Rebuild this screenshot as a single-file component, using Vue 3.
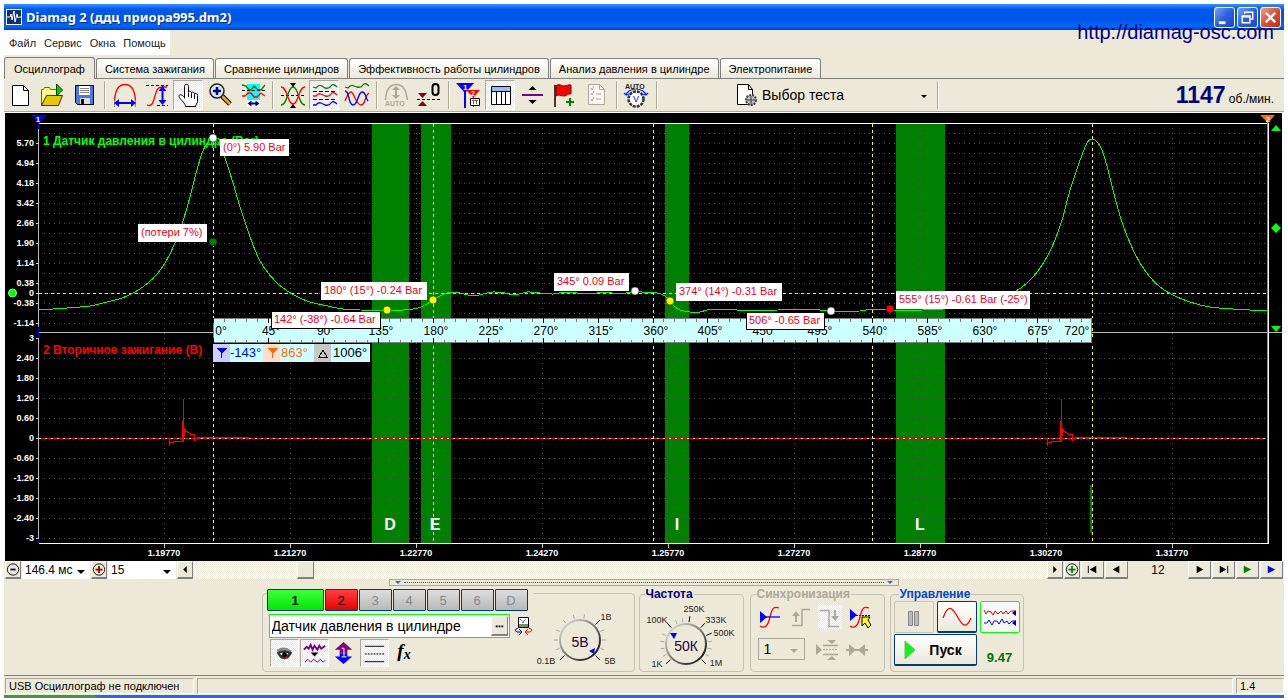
<script setup>
import { ref } from 'vue'

const tabs = [
  'Осциллограф',
  'Система зажигания',
  'Сравнение цилиндров',
  'Эффективность работы цилиндров',
  'Анализ давления в цилиндре',
  'Электропитание',
]
const menu = ['Файл', 'Сервис', 'Окна', 'Помощь']
const channelName = ref('Датчик давления в цилиндре')

const tools = [
  { t: 'Новый', i: '<path d="M7.5 4.5h11l5 5v15h-16z" fill="#fff" stroke="#000"/><path d="M18.5 4.5v5h5" fill="none" stroke="#000"/>' },
  { t: 'Открыть', i: '<path d="M4.5 24.5v-16h2l1-2h5l1 2h7v5" fill="#ffff80" stroke="#806000"/><path d="M4.5 24.5l5-10h16l-4 10z" fill="#e8c800" stroke="#403000"/><path d="M19.5 3v12l6-6z" fill="#0c0" stroke="#004000"/>' },
  { t: 'Сохранить', i: '<path d="M6.5 4.5h18v19h-16l-2-2z" fill="#4878e0" stroke="#000"/><path d="M10 5h11v9h-11z" fill="#fff"/><path d="M11 7.5h9M11 9.5h9M11 11.5h9" stroke="#888"/><path d="M11 17h10v6h-10z" fill="#ddd"/><path d="M12 18h3v5h-3z" fill="#111"/>' },
  'sep',
  { t: 'Период', i: '<path d="M5.5 20C6 10 9 3.5 16 3.5S26 10 26.5 20" fill="none" stroke="red" stroke-width="1.3"/><path d="M5.5 19v7M26.5 19v7" stroke="#888"/><path d="M5 22l5-4v3h12v-3l5 4-5 4v-3h-12v3z" fill="#00f"/>' },
  { t: 'Амплитуда', i: '<path d="M5 4.5h22M16 24.5h11" stroke="#000" stroke-dasharray="3 2"/><path d="M6 24c5 2 6-2 8-9s3-9 7-9h5" fill="none" stroke="red" stroke-width="1.3"/><path d="M21.5 5l4 5h-3v9h3l-4 5-4-5h3v-9h-3z" fill="#00f"/>' },
  { t: 'Рука', on: 1, i: '<path d="M11.5 17.5V5.5c0-3 4-3 4 0v6c0-2 3-2 3 1 0-2 3-2 3 1 0-2 3-1 3 1v6c0 2-2 3-2 5h-10c0-3-4-6-6-9-2-3 2-4 5 0" fill="#fff" stroke="#000"/><path d="M15.5 12v4M18.5 13v4M21.5 14v4" stroke="#000"/>' },
  { t: 'Лупа', i: '<path d="M17 15l8 8" stroke="#000" stroke-width="5"/><path d="M17 15l8 8" stroke="#e8a020" stroke-width="3"/><circle cx="12" cy="10" r="7" fill="#d8ecff" stroke="#222" stroke-width="1.5"/><path d="M8 10h8M12 6v8" stroke="#000090" stroke-width="2.5"/>' },
  { t: 'Участок', i: '<path d="M10 3h13v23h-13z" fill="#0ff"/><path d="M5 4l4 1 3 4h2l3-4 4 4h3l4-5" fill="none" stroke="green" stroke-width="1.3"/><path d="M5 9.5h23" stroke="#000" stroke-dasharray="3 2"/><path d="M5 15h3l3-3h3l3 4h3l4-4 4 3" fill="none" stroke="red" stroke-width="1.3"/><path d="M10 19h13v7h-13z" fill="#fff"/><path d="M10.5 22.5l4-3v2h4v-2l4 3-4 3v-2h-4v2z" fill="#0000a0"/>' },
  'sep',
  { t: 'Выравнивание', i: '<path d="M4 14.5h24" stroke="#000" stroke-dasharray="3 2"/><path d="M4 24c7 0 6-18 12-18s5 18 12 18" fill="none" stroke="green" stroke-width="1.3"/><path d="M4 6c7 0 6 17 12 17s5-17 12-17" fill="none" stroke="red" stroke-width="1.3"/><path d="M13 2h6l-3 4zM13 27h6l-3-4z" fill="#000"/>' },
  { t: 'Раздельно', on: 1, i: '<path d="M4 10.5h24M4 18.5h24" stroke="#000" stroke-dasharray="4 2"/><path d="M4 6l3 1q3-4 6-2l3 2q4 1 6-2t6 1" fill="none" stroke="green" stroke-width="1.3"/><path d="M4 15h3q2-3 5-2l4 2q4 1 6-2t6 1" fill="none" stroke="red" stroke-width="1.3"/><path d="M4 24h3q2-3 5-2l4 2q4 1 6-2t6 1" fill="none" stroke="#00f" stroke-width="1.3"/>' },
  { t: 'Совместно', i: '<path d="M4 6l3 1q3-4 6-2l3 1q4 1 6-2t6 1" fill="none" stroke="green" stroke-width="1.3"/><path d="M4 20c2-4 3-9 6-9s5 13 10 13 3-9 8-12" fill="none" stroke="red" stroke-width="1.3"/><path d="M4 10c5 0 3 14 8 14s5-13 9-13 3 5 6 9" fill="none" stroke="#00f" stroke-width="1.3"/>' },
  'sep',
  { t: 'Авто', i: '<path d="M4.5 19C5 10 8 3.5 15.5 3.5S25 10 26.5 19" fill="none" stroke="#aca899" stroke-width="1.5"/><path d="M15 5l4 4h-3v5h3l-4 4-4-4h3v-5h-3z" fill="#aca899"/><text x="4" y="25" font-size="7" font-weight="bold" fill="#aca899">AUTO</text>' },
  { t: 'Ноль', i: '<path d="M4 18.5h23" stroke="#000" stroke-dasharray="3 2"/><path d="M5 12h9l-4.5 5zM5 25h9l-4.5-5z" fill="#900000"/><rect x="19.5" y="3" width="6" height="11" rx="3" fill="none" stroke="#000" stroke-width="2"/>' },
  'sep',
  { t: 'Маркеры', i: '<path d="M3 2h18l-8 9v16h-2v-16z" fill="#00f"/><path d="M13 9h14l-6 7v10h-1v-10z" fill="red"/><text x="10" y="9" font-size="8" fill="#fff" font-weight="bold">1</text><text x="18" y="15" font-size="7" fill="#fff" font-weight="bold">2</text><path d="M17.5 17.5h9v7h-9z" fill="#fff" stroke="#000"/><path d="M19 19.5h6M20.5 19v4M23.5 19v4" stroke="#666"/>' },
  { t: 'Таблица', on: 1, i: '<path d="M6.5 5.5h19v18h-19z" fill="#fff" stroke="#000"/><path d="M7 6h18v4h-18z" fill="#90c0f8"/><path d="M6.5 10.5h19M11.5 10v14M16.5 10v14M20.5 10v14" stroke="#000"/>' },
  { t: 'Разделить', i: '<path d="M5 14h21" stroke="purple" stroke-width="2"/><path d="M11.5 9h8l-4-4zM11.5 19h8l-4 4z" fill="#000"/>' },
  { t: 'Флаг', i: '<path d="M6 4v22" stroke="#000" stroke-width="1.5"/><path d="M7 5c3-3 5 0 8 0s5-2 7-1v9c-3-1-4 2-7 2s-5-2-8 0z" fill="red" stroke="#800000"/><path d="M17 21h8M21 17v8" stroke="green" stroke-width="2"/>' },
  { t: 'Отчёт', i: '<path d="M7.5 3.5h11l5 5v15h-16z" fill="#f8f7f2" stroke="#aca899"/><path d="M18.5 3.5v5h5M10 7l1 2 2-4M10 12l1 2 2-4M10 18l1 2 2-4M15 13h5M15 18h5" fill="none" stroke="#aca899"/>' },
  'sep',
  { t: 'Автонастройка', i: '<text x="4" y="8" font-size="7" font-weight="bold" fill="#222">AUTO</text><circle cx="15" cy="18" r="7.5" fill="#fff" stroke="#333" stroke-width="2.5" stroke-dasharray="3 1"/><text x="12" y="21" font-size="9" fill="#00f">V</text><path d="M5 13l3-3q7-4 14 0l3 3M3 12l2 2 3-1M27 12l-2 2-3-1" fill="none" stroke="#0030ff" stroke-width="1.2"/>' },
  'sep',
]

const smooth = (pts) => {
  let d = `M${pts[0][0]} ${pts[0][1]}`
  for (let i = 0; i < pts.length - 1; i++) {
    const p0 = pts[Math.max(i - 1, 0)]
    const p1 = pts[i]
    const p2 = pts[i + 1]
    const p3 = pts[Math.min(i + 2, pts.length - 1)]
    d += `C${p1[0] + (p2[0] - p0[0]) / 6} ${p1[1] + (p2[1] - p0[1]) / 6} ${p2[0] - (p3[0] - p1[0]) / 6} ${p2[1] - (p3[1] - p1[1]) / 6} ${p2[0]} ${p2[1]}`
  }
  return d
}
const pressure = smooth([
  [39, 310], [67, 308], [90, 306], [107, 302], [122, 298], [135, 292], [148, 283], [157, 274], [165, 263], [175, 243],
  [183, 221], [190, 197], [195, 177], [202, 153], [208, 142], [213, 139], [218, 142], [225, 158], [233, 183], [240, 207],
  [247, 228], [255, 250], [263, 266], [277, 283], [292, 294], [307, 301], [323, 305], [343, 309], [360, 310], [387, 310],
  [403, 310], [418, 308], [427, 304], [433, 300], [440, 296], [447, 293], [453, 292], [460, 293], [473, 296], [483, 294],
  [493, 292], [505, 293], [515, 295], [527, 292], [540, 293], [553, 294], [567, 292], [587, 294], [607, 292], [617, 294],
  [635, 292], [657, 293], [665, 296], [670, 301], [675, 307], [680, 310], [690, 312], [700, 312], [707, 310], [720, 309],
  [737, 310], [747, 311], [778, 310], [820, 310], [832, 311], [860, 311], [866, 310], [890, 310], [923, 310], [943, 309],
  [973, 305], [1000, 298], [1016, 291], [1027, 283], [1038, 271], [1048, 255], [1055, 240], [1063, 217], [1068, 197],
  [1075, 175], [1082, 155], [1087, 143], [1092, 139], [1097, 142], [1102, 150], [1108, 170], [1115, 198], [1122, 222],
  [1130, 243], [1140, 263], [1150, 277], [1160, 287], [1173, 295], [1190, 302], [1210, 307], [1233, 309], [1267, 311],
])
const yTop = [[143, '5.70'], [163, '4.94'], [183, '4.18'], [203, '3.42'], [223, '2.66'], [243, '1.90'], [263, '1.14'], [283, '0.38'], [293, '0'], [303, '-0.38'], [323, '-1.14']]
const yBottom = ['3', '2.40', '1.80', '1.20', '0.60', '0', '-0.60', '-1.20', '-1.80', '-2.40', '-3'].map((v, i) => [338 + i * 20, v])
const yLabels = [...yTop, ...yBottom]
const xLabels = ['1.19770', '1.21270', '1.22770', '1.24270', '1.25770', '1.27270', '1.28770', '1.30270', '1.31770'].map((v, i) => [164 + i * 126, v])
const gridY = [...Array.from({ length: 20 }, (_, i) => 133 + i * 10), ...Array.from({ length: 10 }, (_, i) => 358 + i * 20)]
const bands = [
  { x: 372, w: 37, l: 'D', c: 390 },
  { x: 421, w: 30, l: 'E', c: 435 },
  { x: 665, w: 24, l: 'I', c: 677 },
  { x: 896, w: 49, l: 'L', c: 920 },
]
const strokesX = [213, 433, 653, 872, 1092]
const ruler = Array.from({ length: 81 }, (_, i) => ({ x: Math.round(213 + (i * 879) / 80) + 0.5, major: i % 5 === 0 }))
const degrees = Array.from({ length: 17 }, (_, i) => ({ x: i === 0 ? 221 : i === 16 ? 1077 : Math.round(216 + (i * 879) / 16), v: i * 45 + '°' }))
const callouts = [
  { x: 220, y: 139, w: 69, h: 17, s: '(0°) 5.90 Bar' },
  { x: 138, y: 224, w: 69, h: 18, s: '(потери 7%)' },
  { x: 321, y: 282, w: 106, h: 18, s: '180° (15°) -0.24 Bar' },
  { x: 271, y: 311, w: 109, h: 17, s: '142° (-38°) -0.64 Bar', b: 1 },
  { x: 554, y: 273, w: 75, h: 18, s: '345° 0.09 Bar' },
  { x: 676, y: 283, w: 106, h: 18, s: '374° (14°) -0.31 Bar' },
  { x: 746, y: 312, w: 78, h: 17, s: '506° -0.65 Bar', b: 1 },
  { x: 896, y: 291, w: 134, h: 18, s: '555° (15°) -0.61 Bar (-25°)' },
]
const points = [
  [213, 138, '#fff'], [213, 242, '#008000'], [387, 310, '#ff0'], [433, 300, '#ff0'],
  [635, 291, '#fff'], [670, 301, '#ff0'], [831, 311, '#fff'], [890, 309, '#f00'],
]
const spark = 'M169.5 438v8M170 442.5h3v-1h10v-20M182.5 441V421M183.5 441V399M184.5 436v-8l1 3 2 1 3 2h4v7M195 438h2M197 437.5h52'

const tick = (cx, cy, r1, r2, deg) => {
  const a = (deg * Math.PI) / 180
  return { x1: cx + r1 * Math.sin(a), y1: cy - r1 * Math.cos(a), x2: cx + r2 * Math.sin(a), y2: cy - r2 * Math.cos(a) }
}
const dial = (cx, cy, angles, named) => angles.map((d) => ({ d, main: named.includes(d), ...tick(cx, cy, 22, named.includes(d) ? 28 : 26, d) }))
const voltTicks = dial(50, 53, [-135, -112, -90, -67, -40, -15, 10, 45, 67, 90, 112, 135], [-135, 45, 135])
const freqTicks = dial(46, 49, [-135, -118, -101, -84, -67, -42, -24, -8, 8, 42, 67, 84, 101, 118, 135], [-135, -42, 8, 42, 67, 135])
</script>

<template>
  <div class="window">
    <header class="title">
      <svg class="logo" viewBox="0 0 16 16"><path d="M0 0h16v16H0z" fill="#fff" /><path d="M1 1h14v14H1z" fill="#103070" /><path d="M1 8h3l1-3 1 6 2-9 1 11 2-8 1 4 1-1h2" fill="none" stroke="#fff" /></svg>
      <h1>Diamag 2 (ддц приора995.dm2)</h1>
      <div class="winbtns">
        <button aria-label="Свернуть"><svg viewBox="0 0 20 20"><path d="M4 14h7v3H4z" fill="#fff" /></svg></button>
        <button aria-label="Развернуть"><svg viewBox="0 0 20 20"><path d="M7 6V4.5h8.5v7H13M4.5 8.5h8v7h-8z" fill="none" stroke="#fff" stroke-width="1.5" /><path d="M4 8h9v2H4z" fill="#fff" /></svg></button>
        <button class="close" aria-label="Закрыть"><svg viewBox="0 0 20 20"><path d="M5 5l10 10M15 5L5 15" stroke="#fff" stroke-width="2.5" /></svg></button>
      </div>
      <a class="site" href="#">http://diamag-osc.com</a>
    </header>

    <nav class="menu"><button v-for="m in menu" :key="m">{{ m }}</button></nav>

    <nav class="tabs">
      <button v-for="(t, i) in tabs" :key="t" :class="{ active: i === 0 }">{{ t }}</button>
    </nav>

    <div class="toolbar">
      <template v-for="(b, i) in tools" :key="i">
        <span v-if="b === 'sep'" class="sep"></span>
        <button v-else :class="['tool', { on: b.on }]" :aria-label="b.t"><svg viewBox="0 0 30 28" v-html="b.i"></svg></button>
      </template>
      <div class="test">
        <svg viewBox="0 0 22 24"><path d="M1.5 1.5h11l4 5v15h-15z" fill="#fffff4" stroke="#000" /><path d="M12.5 1.5v5h4" fill="none" stroke="#000" /><circle cx="15" cy="17" r="5" fill="#bbb" stroke="#444" stroke-width="2" stroke-dasharray="2 1" /><path d="M11 17h8M15 13v8" stroke="#444" /></svg>
        <span class="pick"><select aria-label="Выбор теста"><option>Выбор теста</option></select></span>
      </div>
      <span class="sep"></span>
      <p class="rpm"><b>1147</b> об./мин.</p>
    </div>

    <svg class="scope" viewBox="4 112 1280 449" shape-rendering="crispEdges">
      <rect x="4" y="112" width="1280" height="449" fill="#fff" />
      <rect x="5" y="113" width="1277" height="448" fill="#000" />
      <rect v-for="b in bands" :key="b.l" :x="b.x" y="124" :width="b.w" height="419" fill="#008000" />
      <path v-for="y in gridY" :key="'g' + y" :d="`M44 ${y}.5H1266`" stroke="#505050" stroke-dasharray="1 4" />
      <path v-for="x in xLabels" :key="'v' + x[0]" :d="`M${x[0]}.5 128V543`" stroke="#505050" stroke-dasharray="1 4" />
      <path d="M39 293.5H1266" stroke="#ddd" stroke-dasharray="3 3" />
      <path d="M39 332.5H1282" stroke="#bbb" />
      <path d="M39 438.5H1266" stroke="#f00" />
      <path d="M39 438.5H1266" stroke="#ddd" stroke-dasharray="2 4" />
      <path d="M38.5 123V543" stroke="#bbb" />
      <path v-for="y in yLabels" :key="'t' + y[0]" :d="`M36 ${y[0]}.5h3`" stroke="#ccc" />
      <path v-for="x in xLabels" :key="'b' + x[0]" :d="`M${x[0]}.5 544v4`" stroke="#ccc" />
      <path d="M38.5 122v7M38.5 327v11M38.5 539v5" stroke="#00f" />
      <path d="M39 123.5H1267M39 543.5H1269" stroke="#fff" />
      <path d="M1268.5 123V544" stroke="#fff" /><path d="M1267.5 118V543" stroke="#ff6a00" />
      <text x="43" y="145" class="ch" fill="#0f0">1 Датчик давления в цилиндре (Bar)</text>
      <text x="43" y="354" class="ch" fill="#f00">2 Вторичное зажигание (В)</text>
      <path v-for="x in strokesX" :key="'s' + x" :d="`M${x}.5 124V543`" stroke="#ff4" stroke-dasharray="3 3" />
      <rect x="1090" y="485" width="2" height="48" fill="#008000" />
      <path :d="pressure" fill="none" stroke="#0f0" />
      <path :d="spark" fill="none" stroke="#f00" />
      <path :d="spark" transform="translate(878 0)" fill="none" stroke="#f00" />

      <rect x="213.5" y="318.5" width="878" height="24" fill="#cff" stroke="#808080" />
      <path v-for="r in ruler" :key="'r' + r.x" :d="`M${r.x} 318v${r.major ? 5 : 4}M${r.x} 343v${r.major ? -5 : -3}`" :stroke="r.major ? '#000' : '#777'" />
      <text v-for="d in degrees" :key="d.v" :x="d.x" y="335" class="deg">{{ d.v }}</text>

      <rect x="213" y="344" width="157" height="18" fill="#cff" />
      <rect x="213" y="344" width="17" height="18" fill="#ccf" /><rect x="263" y="344" width="17" height="18" fill="#fdc" /><rect x="314" y="344" width="17" height="18" fill="#c8c8c8" />
      <path d="M216 348h11l-5 5v5h-1v-5z" fill="#00f" /><path d="M267 348h11l-5 5v5h-1v-5z" fill="#ff6a00" /><path d="M318.5 357.5h9l-4.5-7z" fill="none" stroke="#000" />
      <text x="230" y="357" class="cur" fill="#00f">-143°</text><text x="281" y="357" class="cur" fill="#ff6a00">863°</text><text x="333" y="357" class="cur" fill="#000">1006°</text>

      <g v-for="c in callouts" :key="c.s">
        <rect :x="c.b ? c.x + 0.5 : c.x" :y="c.b ? c.y + 0.5 : c.y" :width="c.w" :height="c.h" fill="#fff" :stroke="c.b ? '#000' : 'none'" />
        <text :x="c.x + 3" :y="c.y + 12" class="call">{{ c.s }}</text>
      </g>
      <g shape-rendering="auto">
        <circle v-for="(p, i) in points" :key="i" :cx="p[0]" :cy="p[1]" r="4" :fill="p[2]" stroke="#000" stroke-width=".5" />
        <circle cx="12.5" cy="293" r="4" fill="#0f0" stroke="#8f8" />
        <path d="M31 115h16l-8 8z" fill="#00f" /><path d="M1260 115h15l-7 8z" fill="#ff6a00" />
        <path d="M1271 131h10l-5-6zM1276 223l5 5-5 5-5-5zM1271 326h10l-5 6z" fill="#0f0" />
      </g>
      <text x="38" y="122" class="mk">1</text><text x="1268" y="122" class="mk">2</text>
      <text v-for="y in yLabels" :key="'yl' + y[0]" x="34" :y="y[0] + 3" class="ax end">{{ y[1] }}</text>
      <text v-for="x in xLabels" :key="'xl' + x[0]" :x="x[0]" y="556" class="ax mid">{{ x[1] }}</text>
      <text v-for="b in bands" :key="'bl' + b.l" :x="b.c" y="530" class="band">{{ b.l }}</text>
    </svg>

    <div class="nav">
      <button class="sq" aria-label="Уменьшить масштаб"><svg viewBox="0 0 16 16"><circle cx="8" cy="8" r="6.5" fill="none" stroke="#000" /><path d="M5 8h6" stroke="#000080" stroke-width="2" /></svg></button>
      <span class="combo"><select aria-label="Развёртка"><option>146.4 мс</option></select></span>
      <button class="sq" aria-label="Увеличить масштаб"><svg viewBox="0 0 16 16"><circle cx="8" cy="8" r="6.5" fill="none" stroke="#000" /><path d="M4 8h8M8 4v8" stroke="#900000" stroke-width="2" /></svg></button>
      <span class="combo"><select aria-label="Масштаб"><option>15</option></select></span>
      <button class="sq" aria-label="Влево"><svg viewBox="0 0 16 16"><path d="M10 4v8L6 8z" /></svg></button>
      <input class="scroll" type="range" min="0" max="1000" value="124" aria-label="Прокрутка" />
      <button class="sq" aria-label="Вправо"><svg viewBox="0 0 16 16"><path d="M6 4v8l4-4z" /></svg></button>
      <button class="sq" aria-label="Добавить"><svg viewBox="0 0 16 16"><circle cx="8" cy="8" r="6.5" fill="none" stroke="#000" /><path d="M4 8h8M8 4v8" stroke="#008000" stroke-width="2" /></svg></button>
      <button class="wide" aria-label="В начало"><svg viewBox="0 0 22 16"><path d="M6 4h1v8H6zM8 8l7-4v8z" /></svg></button>
      <button class="wide" aria-label="Назад"><svg viewBox="0 0 22 16"><path d="M7 8l7-4v8z" /></svg></button>
      <output>12</output>
      <button class="wide" aria-label="Вперёд"><svg viewBox="0 0 22 16"><path d="M15 8L8 4v8z" /></svg></button>
      <button class="wide" aria-label="В конец"><svg viewBox="0 0 22 16"><path d="M15 4h1v8h-1zM14 8L7 4v8z" /></svg></button>
      <button class="wide" aria-label="Воспроизвести"><svg viewBox="0 0 22 16"><path d="M15 8L7 4v8z" fill="#008000" /></svg></button>
      <button class="wide" aria-label="Воспроизвести с маркера"><svg viewBox="0 0 22 16"><path d="M15 8L7 4v8z" fill="#00f" /></svg></button>
    </div>

    <div class="splitter"><i></i><span></span><i></i></div>

    <main class="panels">
      <section class="group channel">
        <div class="chan">
          <div class="nums">
            <button class="c1">1</button><button class="c2">2</button>
            <button v-for="n in ['3', '4', '5', '6', 'D']" :key="n" disabled>{{ n }}</button>
          </div>
          <div class="line">
            <div class="name"><input v-model="channelName" aria-label="Датчик канала" /><button aria-label="Выбрать датчик"><svg viewBox="0 0 16 18"><path d="M4 9h2v2H4zM7 9h2v2H7zM10 9h2v2h-2z" /></svg></button></div>
            <svg class="swap" viewBox="0 0 20 20"><path d="M4.5 1.5h10v10h-10z" fill="#fff" stroke="#000" /><path d="M5 8h9v3H5z" fill="#696" /><path d="M6 3l3 3 3-3M9 6v2" stroke="#000" stroke-dasharray="1 1" fill="none" /><path d="M4 12q-5 2-1 4h4M5 13l3 3-3 3" stroke="#000090" fill="none" /><path d="M15 12q5 2 1 4h-4M14 13l-3 3 3 3" stroke="red" fill="none" /></svg>
          </div>
          <div class="icons">
            <button class="on" aria-label="Показать"><svg viewBox="0 0 28 28"><path d="M6 10q8-5 15 1l-1 3H7z" fill="#888" /><path d="M6 13q8-4 16 0-3 7-8 7t-8-7z" fill="#333" /><path d="M9 14q5-2 9 0-4 5-9 0z" fill="#fff" /><circle cx="14" cy="15" r="2.5" fill="#000" /><circle cx="16" cy="18" r="1" fill="red" /></svg></button>
            <button class="on" aria-label="Фильтр"><svg viewBox="0 0 28 28"><path d="M3 10l3-3 2 2 2-4 2 5 2-4 3 4 2-4 2 3 4-3" fill="none" stroke="purple" stroke-width="2" /><path d="M10 13h8l-4 4z" /><path d="M4 23l3-3 3 3 3-3 4 3 3-3 3 3 2-2" fill="none" stroke="purple" /></svg></button>
            <button aria-label="Сдвиг"><svg viewBox="0 0 28 28"><path d="M14 2l9 8h-5v4H10v-4H5z" fill="purple" /><path d="M14 25l9-8h-5v-3H10v3H5z" fill="#00f" /><path d="M12 8.500h2.500v9M12 17.500h5" stroke="#fff" fill="none" /></svg></button>
            <button class="on" aria-label="Уровни"><svg viewBox="0 0 28 28"><path d="M4 6.5h20M4 22.5h20" stroke="#000" /><path d="M4 14.5h20" stroke="#000" stroke-dasharray="2 1" /></svg></button>
            <button class="fx" aria-label="Функция">f<sub>x</sub></button>
          </div>
        </div>
        <svg class="knob" viewBox="0 0 100 84">
          <defs><linearGradient id="ring" x1="0" y1="0" x2="1" y2="1"><stop offset="0" stop-color="#eee" /><stop offset=".5" stop-color="#777" /><stop offset="1" stop-color="#000" /></linearGradient></defs>
          <path v-for="t in voltTicks" :key="t.d" :d="`M${t.x1} ${t.y1}L${t.x2} ${t.y2}`" :stroke="t.main ? '#000' : '#aca899'" />
          <circle cx="50" cy="53" r="20" fill="#ece9d8" stroke="url(#ring)" stroke-width="2" />
          <path d="M65 61l-1 6-5-3z" fill="#00f" />
          <text x="50" y="60" class="val">5В</text><text x="76" y="33">1В</text><text x="16" y="77">0.1В</text><text x="80" y="77">5В</text>
        </svg>
      </section>

      <fieldset class="freq">
        <legend>Частота</legend>
        <svg class="knob" viewBox="0 0 94 76">
          <path v-for="t in freqTicks" :key="t.d" :d="`M${t.x1} ${t.y1}L${t.x2} ${t.y2}`" :stroke="t.main ? '#000' : '#aca899'" />
          <circle cx="46" cy="49" r="20" fill="#ece9d8" stroke="url(#ring)" stroke-width="2" />
          <path d="M30 38h7l-3 6z" fill="#00f" />
          <text x="46" y="56" class="val">50К</text>
          <text x="54" y="17">250K</text><text x="17" y="28">100K</text><text x="76" y="28">333K</text><text x="84" y="41">500K</text><text x="17" y="72">1K</text><text x="76" y="71">1M</text>
        </svg>
      </fieldset>

      <fieldset class="sync">
        <legend>Синхронизация</legend>
        <div class="syncrow">
          <button aria-label="Источник"><svg viewBox="0 0 24 24"><path d="M2 21c5 3 8 0 10-9s4-11 9-9" fill="none" stroke="red" stroke-width="1.3" /><path d="M2 12h20" stroke="#00f" stroke-width="1.3" /><path d="M2 6v12l7-6z" fill="#00f" /></svg></button>
          <button aria-label="Фронт" disabled><svg viewBox="0 0 24 24"><path d="M4 20.5h10v-16h8" fill="none" stroke="#aca899" stroke-width="1.5" /><path d="M8 6l4 5h-3v6H7v-6H4z" fill="#aca899" /></svg></button>
          <button class="on" aria-label="Спад" disabled><svg viewBox="0 0 24 24"><path d="M2 5.5h9v16h10" fill="none" stroke="#aca899" stroke-width="1.5" /><path d="M17 16l4-5h-3V5h-2v6h-3z" fill="#aca899" /></svg></button>
          <button aria-label="Уровень"><svg viewBox="0 0 24 24"><path d="M2 21c5 3 8 0 10-9s4-11 9-9" fill="none" stroke="red" stroke-width="1.3" /><path d="M2 10.5h20" stroke="#00f" stroke-dasharray="2 1" /><path d="M2 4v12l7-6z" fill="#00f" /><path d="M14 12h8l-2 3 3 5-3 3-3-5-3 3z" fill="#ff0" stroke="#000" /></svg></button>
        </div>
        <div class="syncrow">
          <span class="mini"><select disabled aria-label="Канал"><option>1</option></select></span>
          <svg viewBox="0 0 24 24"><path d="M1 7v11l6-5zM12 3h9l-4 4zM12 23h9l-4-4z" fill="#aca899" /><path d="M8 8.5h15M8 17.5h15" stroke="#aca899" stroke-width="1.5" /><path d="M8 12.5h15" stroke="#aca899" stroke-dasharray="2 1" /></svg>
          <svg viewBox="0 0 24 24"><path d="M1 13h22" stroke="#aca899" stroke-width="2" /><path d="M4 7l7 6-7 6zM20 7l-7 6 7 6z" fill="#aca899" /></svg>
        </div>
      </fieldset>

      <fieldset class="ctl">
        <legend>Управление</legend>
        <div class="modes">
          <button disabled aria-label="Пауза"><svg viewBox="0 0 38 30"><path d="M13.5 9.5h4v14h-4zM19.5 9.5h4v14h-4z" fill="#bbb" stroke="#888" /></svg></button>
          <button class="blue" aria-label="Синус"><svg viewBox="0 0 38 30"><path d="M5 16C10 2 14 5 19 14s9 14 14 2" fill="none" stroke="red" stroke-width="1.3" /></svg></button>
          <button class="lime" aria-label="Запись"><svg viewBox="0 0 38 30"><path d="M3 8l2 4 2-3 3 1 2 3 2-4 3 3 3-3 2 3 3-3 2 3 3-3h4" fill="none" stroke="red" /><path d="M3 21h3l2-3 3 5 2-4h3l2 3 3-5 2 4 3-2 2 3 3-3h3" fill="none" stroke="#00f" /><path d="M35 8v6l-4-3zM35 18v6l-4-3z" fill="#000080" /></svg></button>
        </div>
        <div class="modes">
          <button class="blue start"><svg viewBox="0 0 12 20"><path d="M1 1v18l10-9z" fill="#0f0" stroke="#8a8" /></svg><span>Пуск</span></button>
          <output>9.47</output>
        </div>
      </fieldset>
    </main>

    <footer class="status"><span>USB Осциллограф не подключен</span><span></span><span>1.4</span></footer>
    <div class="taskbar"><i></i></div>
  </div>
</template>

<style>
body { background: #fff; }
</style>

<style scoped>
* { box-sizing: border-box; }
.window {
  display: flex; flex-direction: column; margin: 0 4px; border-top: 4px solid #fff; background: #ece9d8;
  font: 11px "Liberation Sans", Arial, sans-serif; color: #000;
}
button { font: inherit; color: inherit; padding: 0; margin: 0; border: 0; background: none; display: block; }
select, input { font: inherit; color: inherit; margin: 0; padding: 0; border: 0; background: none; border-radius: 0; appearance: none; width: 100%; min-width: 0; }
svg { display: block; flex: none; }
.title {
  position: relative; display: flex; align-items: center; height: 26px; padding: 0 3px 0 2px; gap: 4px;
  background: linear-gradient(#3a93ff, #0058ee 20%, #0055e5 60%, #0068ff 85%, #0040c8);
}
.logo { width: 16px; height: 16px; }
h1 { margin: 0; flex: 1; font: bold 13px "Noto Sans", sans-serif; color: #fff; text-shadow: 1px 1px #10308c; }
.winbtns { display: flex; gap: 2px; }
.winbtns button { width: 21px; height: 21px; border: 1px solid #fff; border-radius: 3px; background: linear-gradient(135deg, #7ba2f0, #2860e0 50%, #1848c8); }
.winbtns .close { background: linear-gradient(135deg, #f0a088, #e05030 50%, #c03010); }
.site { position: absolute; right: 10px; top: 16px; font-size: 20px; line-height: 24px; color: #000080; text-decoration: none; }
.menu { display: flex; background: #fff; height: 25px; width: 166px; padding-left: 5px; gap: 8px; }
.menu button { color: #222; }
.tabs { display: flex; gap: 1px; height: 24px; align-items: flex-end; border-bottom: 1px solid #808080; padding-top: 2px; }
.tabs button { height: 20px; padding: 0 8px; border: 1px solid #808080; border-bottom: 0; border-radius: 3px 3px 0 0; background: linear-gradient(#fff, #ece9d8); white-space: nowrap; }
.tabs .active { height: 22px; margin-bottom: -1px; padding: 0 9px; background: #ece9d8; }
.toolbar { display: flex; align-items: center; gap: 2px; height: 33px; padding: 0 10px 0 1px; border-bottom: 1px solid #aca899; }
.tool { width: 30px; height: 30px; }
.tool svg { width: 30px; height: 28px; }
.on { background: repeating-conic-gradient(#fff 0 25%, #ece9d8 0 50%) 0 0 / 2px 2px; border: 1px solid #fff; border-top-color: #aca899; border-left-color: #aca899; }
.tool.on svg { margin: -1px; }
.sep { width: 6px; height: 28px; background: linear-gradient(90deg, transparent 3px, #aca899 3px 4px, #fff 4px 5px, transparent 5px); }
.test { display: flex; align-items: center; gap: 4px; margin-left: 75px; width: 196px; }
.test svg { width: 22px; height: 24px; }
.pick { position: relative; flex: 1; font-size: 14px; }
.pick::after, .combo::after, .mini::after { content: ""; position: absolute; right: 5px; top: 50%; border: 4px solid transparent; border-top-color: #000; border-bottom: 0; pointer-events: none; }
.pick::after { border-width: 3px; border-bottom: 0; }
.rpm { margin: 0 0 0 auto; font-size: 12px; }
.rpm b { font-size: 23px; line-height: 28px; color: #000080; }
.scope { width: 100%; height: auto; }
.ch { font: bold 12px "Liberation Sans", sans-serif; }
.deg { font: 12px "Liberation Sans", sans-serif; text-anchor: middle; }
.cur { font: 13px "Liberation Sans", sans-serif; }
.call { font: 11px "Liberation Sans", sans-serif; fill: #f00020; }
.mk { font: bold 8px "Liberation Sans", sans-serif; fill: #fff; text-anchor: middle; }
.ax { font: bold 9px "Liberation Sans", sans-serif; fill: #fff; }
.end { text-anchor: end; }
.mid { text-anchor: middle; }
.band { font: bold 16px "Liberation Sans", sans-serif; fill: #fff; text-anchor: middle; }
.nav { display: flex; align-items: stretch; height: 18px; padding: 0 1px; gap: 1px; }
.nav button { border: 1px solid #fff; border-right-color: #808080; border-bottom: 2px solid #808080; background: #ece9d8; }
.sq { width: 16px; }
.sq svg { width: 14px; height: 15px; }
.wide { width: 23px; }
.wide svg { width: 21px; height: 15px; }
.combo { position: relative; width: 68px; background: #fff; font-size: 12px; }
.combo select { height: 17px; padding-left: 3px; }
.scroll { flex: 1; height: 18px; margin: 0 -1px; background: repeating-conic-gradient(#fff 0 25%, #ece9d8 0 50%) 0 0 / 2px 2px; }
.scroll::-webkit-slider-thumb { appearance: none; width: 17px; height: 18px; background: #ece9d8; border: 1px solid #fff; border-right-color: #808080; border-bottom: 2px solid #808080; }
.nav output { width: 58px; text-align: center; font-size: 12px; line-height: 18px; }
.splitter { align-self: center; display: flex; align-items: center; justify-content: space-between; width: 510px; height: 7px; border: 1px solid #aca899; padding: 0 5px; }
.splitter i { border: 3px solid transparent; border-top-color: #316ac5; border-bottom: 0; }
.splitter span { flex: 1; margin: 0 3px; border-top: 1px dotted #316ac5; }
.panels { display: flex; justify-content: center; align-items: flex-end; gap: 4px; height: 90px; padding: 0 3px 3px 0; border-bottom: 1px solid #808080; }
.group, fieldset { margin: 0; border: 1px solid #c4c2b4; border-radius: 4px; min-width: 0; }
.group { display: flex; width: 373px; height: 79px; }
fieldset { height: 85px; padding: 0; }
legend { font: bold 12px "Liberation Sans", sans-serif; line-height: 14px; height: 14px; padding: 0 1px; margin-left: 5px; }
.chan { width: 271px; padding-left: 4px; margin-top: -5px; }
.nums { display: flex; gap: 1px; background: #ece9d8; }
.nums button { width: 33px; height: 22px; border: 1px solid #003c74; border-radius: 1px; background: linear-gradient(#ddd, #b8b8b8); color: #888; font-size: 13px; }
.nums .c1 { width: 57px; background: linear-gradient(#40ff40, #00e800); color: #000; font-weight: bold; }
.nums .c2 { background: linear-gradient(#ff4040, #e80000); color: #000; }
.line { display: flex; gap: 4px; align-items: center; margin: 3px 0 1px 2px; }
.name { display: flex; width: 241px; height: 24px; border: 1px solid #0f0; background: #fff; padding: 1px; font-size: 14px; }
.name input { flex: 1; padding-left: 1px; }
.name button { width: 17px; border: 1px solid #fff; border-right-color: #808080; border-bottom: 2px solid #808080; background: #ece9d8; }
.swap { width: 20px; height: 20px; }
.icons { display: flex; gap: 1px; margin-left: 3px; }
.icons button { width: 29px; height: 28px; }
.icons svg { width: 27px; height: 27px; }
.icons .fx { font: italic bold 19px "Liberation Serif", serif; line-height: 24px; }
.fx sub { font-size: 14px; vertical-align: -2px; }
.knob text { font: 9px "Liberation Sans", sans-serif; text-anchor: middle; fill: #222; }
.knob .val { font-size: 14px; fill: #203; }
.channel .knob { width: 100px; height: 84px; margin: -7px 0 0 -4px; }
.freq { width: 105px; }
.freq legend { color: #000080; }
.freq .knob { width: 94px; height: 76px; margin-top: -6px; overflow: visible; }
.sync { width: 135px; margin-left: 2px; }
.sync legend { color: #aca899; }
.syncrow { display: flex; gap: 6px; align-items: center; padding-left: 7px; height: 32px; }
.syncrow svg { width: 24px; height: 24px; }
.syncrow .on { border: 0; }
.mini { position: relative; width: 47px; height: 22px; border: 1px solid #aca899; margin-right: 4px; font-size: 14px; }
.mini select { padding-left: 5px; height: 20px; opacity: 1; }
.mini::after { border-top-color: #aca899; right: 6px; }
.ctl { width: 134px; padding: 0 3px; margin-left: 1px; }
.ctl legend { color: #0046d5; }
.modes { display: flex; gap: 3px; margin-bottom: 1px; align-items: center; }
.modes button { width: 40px; height: 32px; border: 1px solid #c8c6b8; border-radius: 2px; }
.modes .blue { border: 1px solid #003c74; border-bottom-width: 2px; background: linear-gradient(#fff, #ece9d8); }
.modes .lime { border-color: #0f0; background: #f8f8f8; }
.modes svg { width: 38px; height: 30px; }
.modes .start { width: 83px; display: flex; align-items: center; padding-left: 9px; font-size: 14px; font-weight: bold; }
.modes .start svg { width: 12px; height: 20px; }
.start span { flex: 1; text-align: center; }
.modes output { flex: 1; text-align: center; font-weight: bold; font-size: 13px; color: #007000; padding-top: 14px; }
.status { display: grid; grid-template-columns: 189px 1fr 48px; gap: 3px; padding: 2px 0 1px 1px; height: 19px; }
.status span { border: 1px solid #fff; border-top-color: #aca899; border-left-color: #aca899; padding-left: 3px; line-height: 14px; white-space: nowrap; }
.taskbar { height: 4px; background: #2a6ae0; }
.taskbar i { display: block; width: 93px; height: 4px; background: #3c9a3c; border-top-right-radius: 4px; }
</style>
